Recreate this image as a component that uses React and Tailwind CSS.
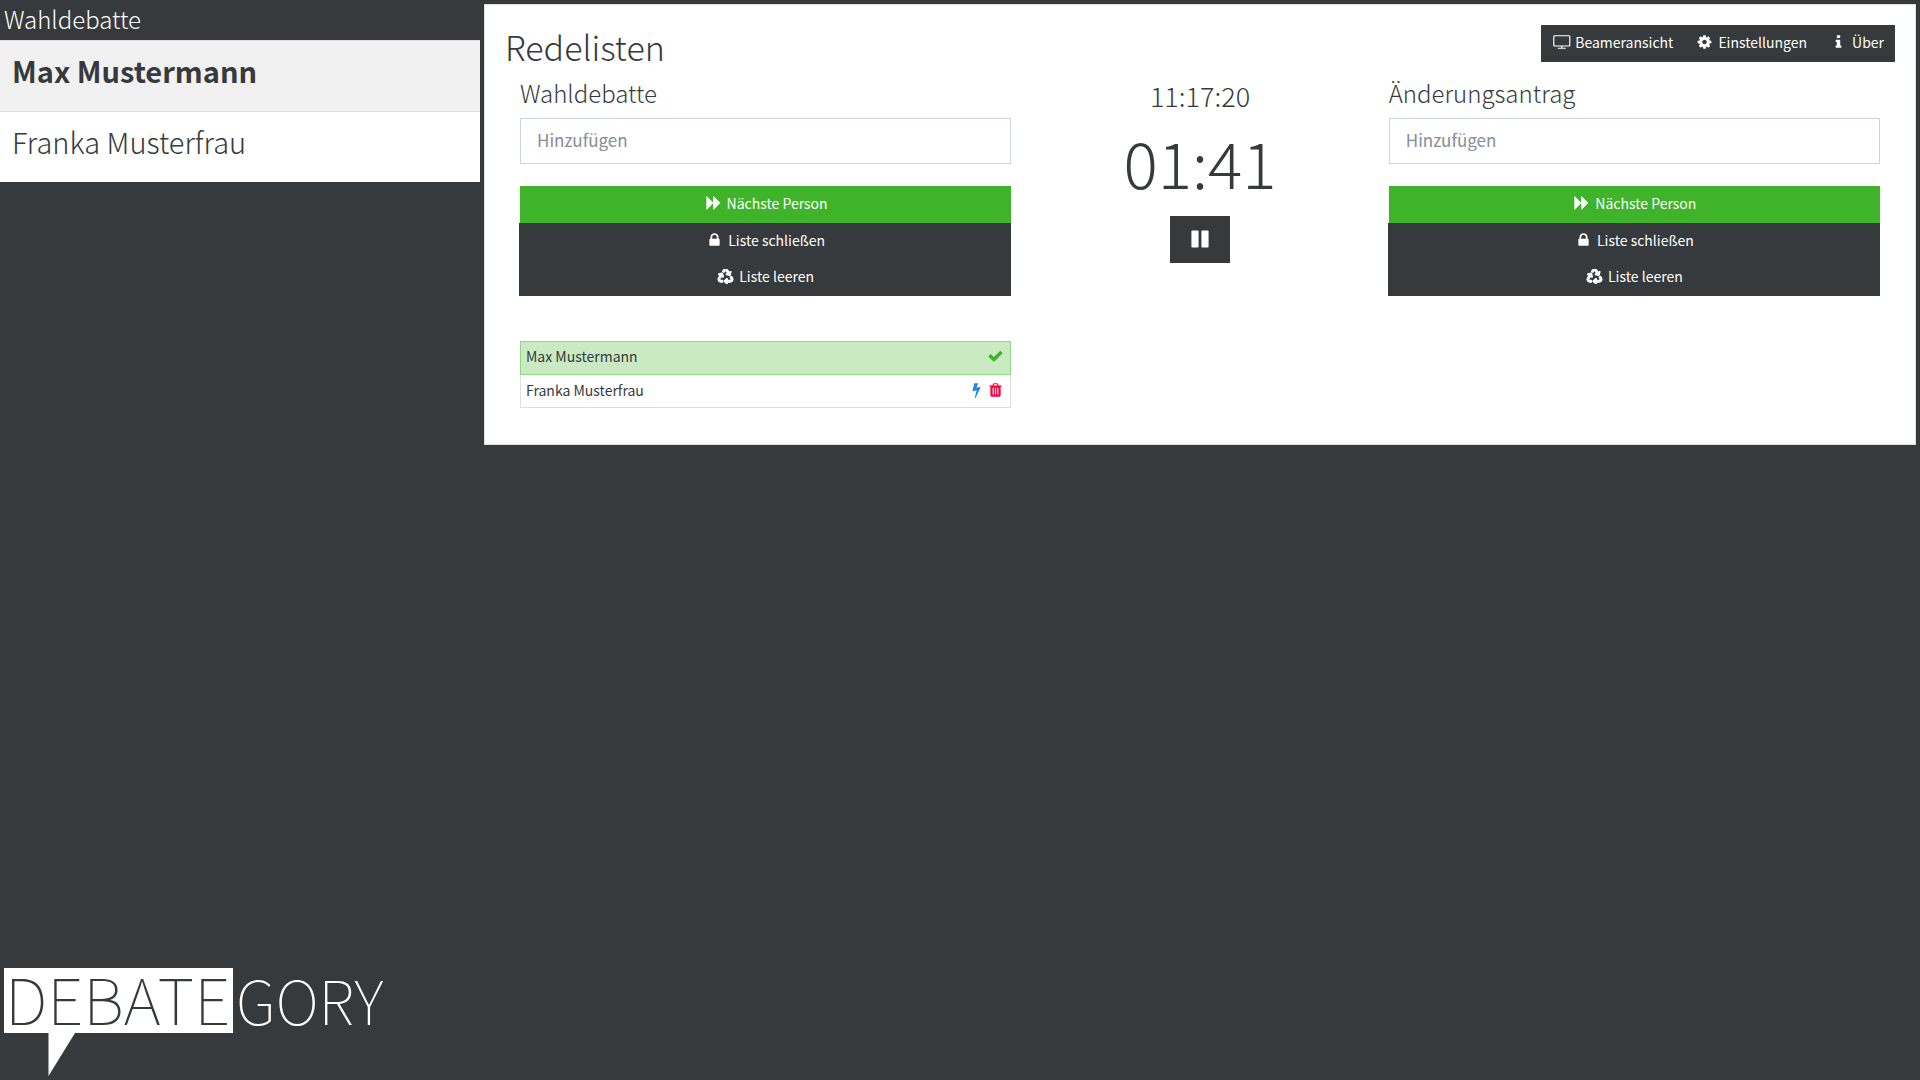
import { FaRecycle } from "react-icons/fa";

const ICONS = {
  check: "M1671 566q0 40-28 68l-724 724-136 136q-28 28-68 28t-68-28l-136-136-362-362q-28-28-28-68t28-68l136-136q28-28 68-28t68 28l294 295 656-657q28-28 68-28t68 28l136 136q28 28 28 68z",
  cog: "M1152 896q0-106-75-181t-181-75-181 75-75 181 75 181 181 75 181-75 75-181zm512-109v222q0 12-8 23t-20 13l-185 28q-19 54-39 91 35 50 107 138 10 12 10 25t-9 23q-27 37-99 108t-94 71q-12 0-26-9l-138-108q-44 23-91 38-16 136-29 186-7 28-36 28h-222q-14 0-24.5-8.5t-11.5-21.5l-28-184q-49-16-90-37l-141 107q-10 9-25 9-14 0-25-11-126-114-165-168-7-10-7-23 0-12 8-23 15-21 51-66.5t54-70.5q-27-50-41-99l-183-27q-13-2-21-12.5t-8-23.5v-222q0-12 8-23t19-13l186-28q14-46 39-92-40-57-107-138-10-12-10-24 0-10 9-23 26-36 98.5-107.5t94.5-71.5q13 0 26 10l138 107q44-23 91-38 16-136 29-186 7-28 36-28h222q14 0 24.5 8.5t11.5 21.5l28 184q49 16 90 37l142-107q9-9 24-9 13 0 25 10 129 119 165 170 7 8 7 22 0 12-8 23-15 21-51 66.5t-54 70.5q26 50 41 98l183 28q13 2 21 12.5t8 23.5z",
  lock: "M640 768h512v-192q0-106-75-181t-181-75-181 75-75 181v192zm832 96v576q0 40-28 68t-68 28h-960q-40 0-68-28t-28-68v-576q0-40 28-68t68-28h32v-192q0-184 132-316t316-132 316 132 132 316v192h32q40 0 68 28t28 68z",
  pause: "M1664 192v1408q0 26-19 45t-45 19h-512q-26 0-45-19t-19-45v-1408q0-26 19-45t45-19h512q26 0 45 19t19 45zm-896 0v1408q0 26-19 45t-45 19h-512q-26 0-45-19t-19-45v-1408q0-26 19-45t45-19h512q26 0 45 19t19 45z",
  trash: "M704 1376v-704q0-14-9-23t-23-9h-64q-14 0-23 9t-9 23v704q0 14 9 23t23 9h64q14 0 23-9t9-23zm256 0v-704q0-14-9-23t-23-9h-64q-14 0-23 9t-9 23v704q0 14 9 23t23 9h64q14 0 23-9t9-23zm256 0v-704q0-14-9-23t-23-9h-64q-14 0-23 9t-9 23v704q0 14 9 23t23 9h64q14 0 23-9t9-23zm-544-992h448l-48-117q-7-9-17-11h-317q-10 2-17 11zm928 32v64q0 14-9 23t-23 9h-96v948q0 83-47 143.5t-113 60.5h-832q-66 0-113-58.5t-47-141.5v-952h-96q-14 0-23-9t-9-23v-64q0-14 9-23t23-9h309l70-167q15-37 54-63t79-26h320q40 0 79 26t54 63l70 167h309q14 0 23 9t9 23z",
  bolt: "M1333 566q18 20 7 44l-540 1157q-13 25-42 25-4 0-14-2-17-5-25.5-19t-4.5-30l197-808-406 101q-4 1-12 1-18 0-31-11-18-15-13-39l201-825q4-14 16-23t28-9h328q19 0 32 12.5t13 29.5q0 8-5 18l-171 463 396-98q8-2 12-2 19 0 34 15z",
  info: "M1216 1344v128q0 26-19 45t-45 19h-512q-26 0-45-19t-19-45v-128q0-26 19-45t45-19h64v-384h-64q-26 0-45-19t-19-45v-128q0-26 19-45t45-19h384q26 0 45 19t19 45v576h64q26 0 45 19t19 45zm-128-1152v192q0 26-19 45t-45 19h-256q-26 0-45-19t-19-45v-192q0-26 19-45t45-19h256q26 0 45 19t19 45z",
  forward: "M141 1644q-19 19-32 13t-13-32v-1472q0-26 13-32t32 13l710 710q9 9 13 19v-710q0-26 13-32t32 13l710 710q19 19 19 45t-19 45l-710 710q-19 19-32 13t-13-32v-710q-4 10-13 19z",
  screen: "M1760 1248v-960q0-13-9.5-22.5t-22.5-9.5h-1600q-13 0-22.5 9.5t-9.5 22.5v960q0 13 9.5 22.5t22.5 9.5h1600q13 0 22.5-9.5t9.5-22.5zm128-960v960q0 66-47 113t-113 47h-736v128h352q14 0 23 9t9 23v64q0 14-9 23t-23 9h-832q-14 0-23-9t-9-23v-64q0-14 9-23t23-9h352v-128h-736q-66 0-113-47t-47-113v-960q0-66 47-113t113-47h1600q66 0 113 47t47 113z",
};

function Icon({ name, className = "h-4 w-[19px]" }) {
  return (
    <svg viewBox="0 0 1792 1792" fill="currentColor" overflow="visible" aria-hidden="true" className={`shrink-0 ${className}`}>
      <path d={ICONS[name]} />
    </svg>
  );
}

function SpeakerList({ id, title, speakers }) {
  return (
    <section className="flex flex-col px-[15px]">
      <label htmlFor={id} className="text-2xl leading-8 font-light">{title}</label>
      <input
        id={id}
        type="text"
        placeholder="Hinzufügen"
        className="mt-[9px] h-[46px] w-full border border-[#ced4da] px-4 pb-[3px] text-[17px] outline-none placeholder:text-[#868e96]"
      />
      <div className="mt-[22px] flex flex-col text-sm text-white">
        <button type="button" className="flex h-[37px] items-center justify-center gap-1 bg-[#3fb32a] pb-[3px]">
          <Icon name="forward" />
          Nächste Person
        </button>
        <button type="button" className="-ml-px flex h-[37px] items-center justify-center gap-1 bg-[#373a3c] pb-[3px]">
          <Icon name="lock" />
          Liste schließen
        </button>
        <button type="button" className="-ml-px flex h-9 items-center justify-center gap-1 bg-[#373a3c] pb-1">
          <FaRecycle className="h-[15px] w-[19px]" stroke="currentColor" strokeWidth="36" aria-hidden="true" />
          Liste leeren
        </button>
      </div>
      {speakers.length > 0 && (
        <ul className="mt-[45px] text-sm">
          {speakers.map((speaker) => (
            <li
              key={speaker.name}
              className={
                speaker.active
                  ? "flex h-[34px] items-center justify-between border border-[#93d889] bg-[#c9eac3] px-[5px] pb-1"
                  : "flex h-[33px] items-center justify-between border border-t-0 border-[#dddfe2] px-[5px] pb-[2px]"
              }
            >
              {speaker.name}
              {speaker.active ? (
                <button type="button" aria-label="Erledigt" className="text-[#3fb32a]">
                  <Icon name="check" />
                </button>
              ) : (
                <span className="flex">
                  <button type="button" aria-label="Vorziehen" className="text-[#2780e3]">
                    <Icon name="bolt" />
                  </button>
                  <button type="button" aria-label="Entfernen" className="text-[#ff0039]">
                    <Icon name="trash" />
                  </button>
                </span>
              )}
            </li>
          ))}
        </ul>
      )}
    </section>
  );
}

function Logo() {
  return (
    <svg viewBox="0 0 380 110" className="w-[380px] overflow-visible" role="img" aria-label="Debategory">
      <path d="M1 0h229v65H72L45.500 108V65H1z" fill="#fff" />
      <text x="2" y="57" fontSize="64" fontWeight="100" fill="#373a3c">DEBATE</text>
      <text x="233" y="57" fontSize="60" fontWeight="100" fill="#fff">GORY</text>
    </svg>
  );
}

export default function App() {
  return (
    <div className="grid min-h-screen grid-cols-[1fr_3fr] bg-[#373a3c] font-['Noto_Sans_CJK_SC','Noto_Sans_CJK_JP',sans-serif] text-[#373a3c]">
      <aside className="flex flex-col justify-between">
        <div>
          <h2 className="h-10 pl-1 text-2xl leading-[38px] font-light text-white">Wahldebatte</h2>
          <ol className="text-[29px] leading-[58px]">
            <li className="h-[71px] border-t border-[#dfdfdf] bg-[#f1f1f1] px-3 font-bold">Max Mustermann</li>
            <li className="h-[71px] border-t border-[#dfdfdf] bg-white px-3 font-light">Franka Musterfrau</li>
          </ol>
        </div>
        <div className="pb-[2px] pl-[3px]">
          <Logo />
        </div>
      </aside>
      <main className="m-1 self-start border border-[#dfdfdf] bg-white px-5 pt-5 pb-9">
        <header className="flex h-[52px] items-start justify-between">
          <h1 className="text-[34px] leading-[43px] font-light">Redelisten</h1>
          <nav className="flex h-[37px] bg-[#373a3c] text-sm text-white">
            <button type="button" className="flex items-center gap-1 px-[11px] pb-[3px]">
              <Icon name="screen" />
              Beameransicht
            </button>
            <button type="button" className="flex items-center gap-1 px-[11px] pb-[3px]">
              <Icon name="cog" />
              Einstellungen
            </button>
            <button type="button" className="flex items-center gap-1 px-[11px] pb-[3px]">
              <Icon name="info" />
              Über
            </button>
          </nav>
        </header>
        <div className="grid grid-cols-[3fr_2fr_3fr]">
          <SpeakerList
            id="list-wahldebatte"
            title="Wahldebatte"
            speakers={[{ name: "Max Mustermann", active: true }, { name: "Franka Musterfrau" }]}
          />
          <section className="flex flex-col items-center font-light">
            <time className="text-[27px] leading-[38px]">11:17:20</time>
            <p className="mb-2 text-[64px] leading-[93px]">01:41</p>
            <button type="button" aria-label="Pause" className="flex h-[47px] w-[60px] items-center justify-center bg-[#373a3c] pb-[2px] text-white">
              <Icon name="pause" className="size-5" />
            </button>
          </section>
          <SpeakerList id="list-aenderungsantrag" title="Änderungsantrag" speakers={[]} />
        </div>
      </main>
    </div>
  );
}
